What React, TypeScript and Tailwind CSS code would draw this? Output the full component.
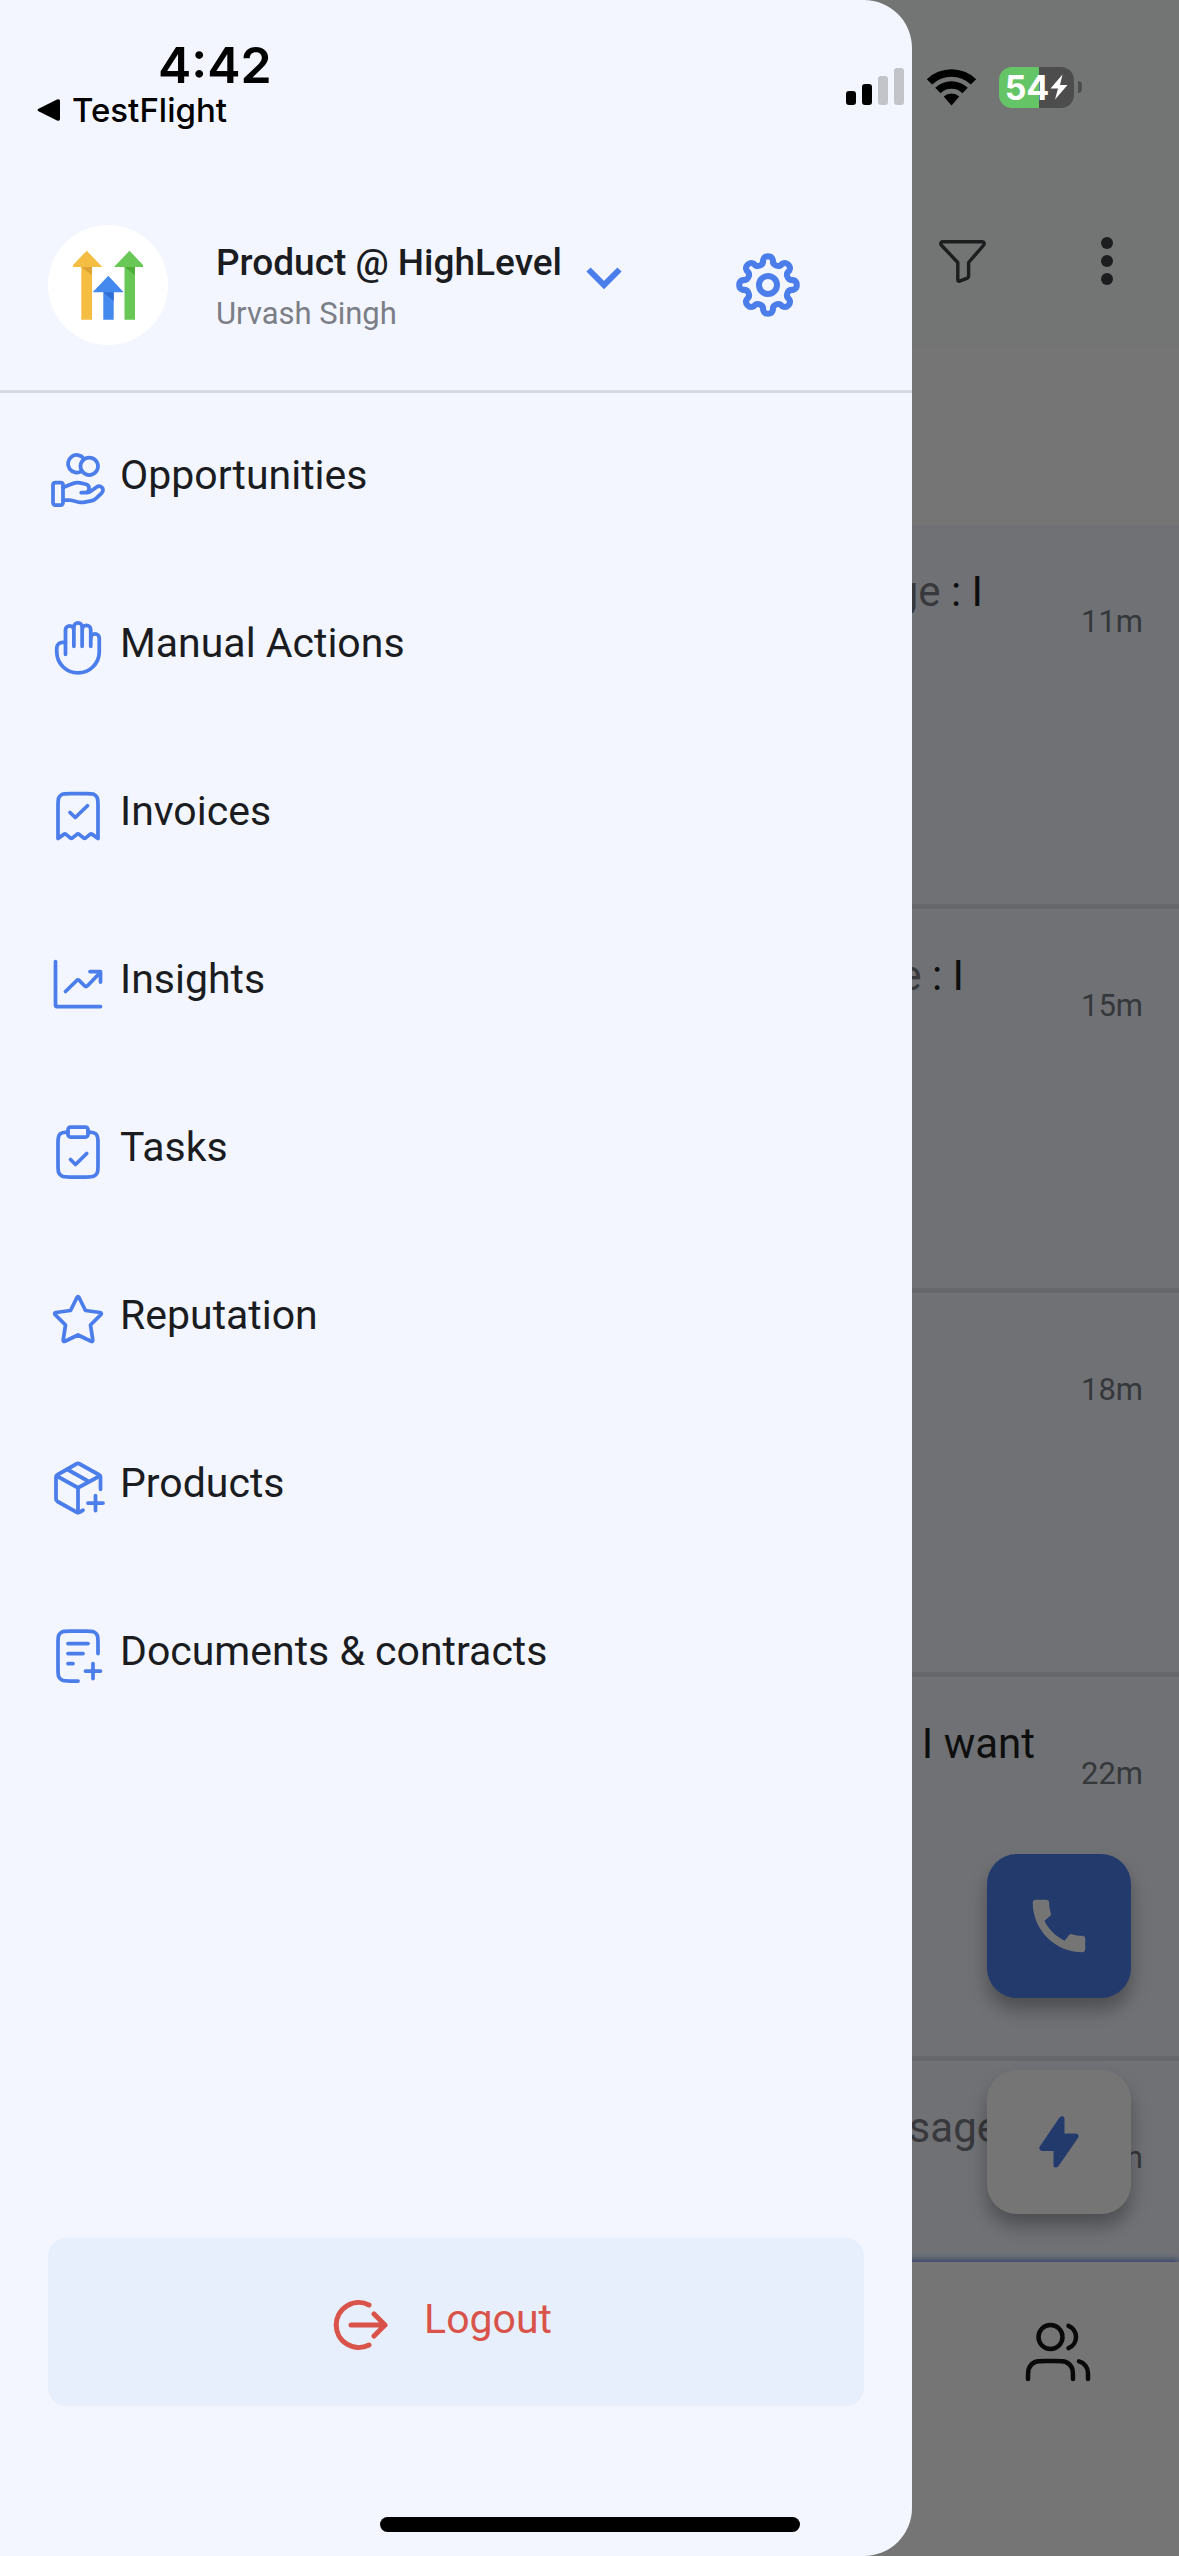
import React from 'react';
import { MdCall } from 'react-icons/md';

const Icon = ({ children, className = 'size-[60px]', strokeWidth = 1.5 }: { children: React.ReactNode; className?: string; strokeWidth?: number }) => (
  <svg
    viewBox="0 0 24 24"
    className={`shrink-0 ${className}`}
    fill="none"
    stroke="currentColor"
    strokeWidth={strokeWidth}
    strokeLinecap="round"
    strokeLinejoin="round"
    aria-hidden="true"
  >
    {children}
  </svg>
);

const menuItems = [
  {
    label: 'Opportunities',
    icon: (
      <>
        <path d="M6 20.09H8.61C8.95 20.09 9.29 20.13 9.62 20.21L12.38 20.88C12.98 21.02 13.6 21.04 14.2 20.92L17.25 20.33C18.06 20.17 18.8 19.79 19.38 19.22L21.54 17.12C22.15 16.52 22.15 15.55 21.54 14.95C20.98 14.41 20.1 14.35 19.48 14.81L16.96 16.64C16.6 16.91 16.16 17.05 15.71 17.05H13.29H14.83C15.7 17.05 16.41 16.36 16.41 15.52V15.21C16.41 14.51 15.92 13.89 15.21 13.72L12.83 13.14C12.44 13.05 12.04 13 11.64 13C10.68 13 8.93 13.8 8.93 13.8L6 15.02" />
        <rect x="2" y="13" width="4" height="9" rx="0.9" />
        <circle cx="16.5" cy="6.5" r="3.5" />
        <path d="M14.3 3.4A3.5 3.5 0 1 0 13.5 8.37" />
      </>
    ),
  },
  {
    label: 'Manual Actions',
    icon: (
      <>
        <path d="M7 14.5V4.7A1.68 1.68 0 0 1 10.35 4.7M10.35 11.3V3.6A1.65 1.65 0 0 1 13.65 3.6V11.3M13.65 4.7A1.7 1.7 0 0 1 17.1 4.7V11.3" />
        <path d="M17.1 8A1.7 1.7 0 0 1 20.5 8V13.5A8.5 8.5 0 0 1 3.5 13.5V12A2.4 2.4 0 0 1 5.9 9.7H7" />
      </>
    ),
  },
  {
    label: 'Invoices',
    icon: (
      <>
        <path d="M4 7.8C4 6.12 4 5.28 4.33 4.64A3 3 0 0 1 5.64 3.33C6.28 3 7.12 3 8.8 3H15.2C16.88 3 17.72 3 18.36 3.33A3 3 0 0 1 19.67 4.64C20 5.28 20 6.12 20 7.8V21L17.7 19.35Q17.25 19.05 16.8 19.35L15.1 20.75Q14.65 21.05 14.2 20.75L12.45 19.35Q12 19.05 11.55 19.35L9.8 20.75Q9.35 21.05 8.9 20.75L7.2 19.35Q6.75 19.05 6.3 19.35L4 21Z" />
        <path d="M8.8 10.6L10.9 12.6L15.8 7.9" />
      </>
    ),
  },
  {
    label: 'Insights',
    icon: (
      <>
        <path d="M3 3V20.4Q3 21 3.6 21H21" />
        <path d="M7 15L11.4 10.7Q12 10.1 12.6 10.7L14.6 12.7Q15.2 13.3 15.8 12.7L21 7.3M16.8 7H21V11.2" />
      </>
    ),
  },
  {
    label: 'Tasks',
    icon: (
      <>
        <path d="M16 4C18 4 18.6 4.2 19.2 4.8C20 5.6 20 6.6 20 8V17.2C20 18.9 20 19.7 19.67 20.36A3 3 0 0 1 18.36 21.67C17.72 22 16.9 22 15.2 22H8.8C7.1 22 6.28 22 5.64 21.67A3 3 0 0 1 4.33 20.36C4 19.7 4 18.9 4 17.2V8C4 6.6 4 5.6 4.8 4.8C5.4 4.2 6 4 8 4" />
        <rect x="8" y="2" width="8" height="4" rx="1" />
        <path d="M9 15L11 17L15.5 12.6" />
      </>
    ),
  },
  {
    label: 'Reputation',
    icon: (
      <path d="M11.6 3Q12 2.3 12.4 3L15 8.2L20.8 9Q21.7 9.3 21.1 9.9L17 14L17.9 19.9Q18 20.8 17.2 20.5L12 18L6.8 20.5Q6 20.8 6.1 19.9L7 14L2.9 9.9Q2.3 9.3 3.2 9L9 8.2Z" />
    ),
  },
  {
    label: 'Products',
    icon: (
      <>
        <path d="M14 20.9L12.5 21.7Q12 22 11.5 21.7L3.8 17.4Q3.2 17 3.2 16.4V7.6Q3.2 7 3.8 6.7L11.5 2.3Q12 2 12.5 2.3L20.4 6.7Q21 7 21 7.6V12.5" />
        <path d="M3.5 7.2L12 11.9L20.7 7.2M12 11.9V21.8M7.8 4.6L16.3 9.4M19 15V21M16 18H22" />
      </>
    ),
  },
  {
    label: 'Documents & contracts',
    icon: (
      <>
        <path d="M20 11V6.8C20 5.12 20 4.28 19.67 3.64A3 3 0 0 0 18.36 2.33C17.72 2 16.88 2 15.2 2H8.8C7.12 2 6.28 2 5.64 2.33A3 3 0 0 0 4.33 3.64C4 4.28 4 5.12 4 6.8V17.2C4 18.88 4 19.72 4.33 20.36A3 3 0 0 0 5.64 21.67C6.28 22 7.12 22 8.8 22H12" />
        <path d="M8 7H16M8 11H14M8 15H10M18 15V21M15 18H21" />
      </>
    ),
  },
];

const conversations = [
  { sender: 'Message', text: ' : I', time: '11m', inset: 'pr-24' },
  { sender: 'Message', text: ' : I', time: '15m', inset: 'pr-[115px]' },
  { sender: '', text: '', time: '18m', inset: '' },
  { sender: '', text: 'I want', time: '22m', inset: 'pr-11' },
  { sender: 'Message', text: '', time: '25m', inset: 'pr-20' },
];

// Closed outline of eight round lobes joined by round valleys
const gearOutline = () => {
  const joints = Array.from({ length: 16 }, (_, i) => {
    const a = ((i - 0.5) / 16) * Math.PI * 2;
    return `${(36 + 25.4 * Math.sin(a)).toFixed(2)} ${(36 - 25.4 * Math.cos(a)).toFixed(2)}`;
  });
  const arcs = joints.map((_, i) => `A5.1 5.1 0 0 ${i % 2 === 0 ? 1 : 0} ${joints[(i + 1) % 16]}`);
  return `M${joints[0]}${arcs.join('')}Z`;
};

const Logo = () => (
  <svg viewBox="0 0 120 120" className="size-[120px] shrink-0 rounded-full bg-white" role="img" aria-label="HighLevel">
    <path d="M33.3 41H44V94.7H33.3Z" fill="#f5bd41" />
    <path d="M25 42V40L38.7 25.7L54.3 42Z" fill="#f5bd41" />
    <path d="M33.3 42H44V50.3Z" fill="#dda233" />
    <path d="M76.5 41H87V94.7H76.5Z" fill="#68c755" />
    <path d="M66 42L81.5 25.7L95 40V42Z" fill="#68c755" />
    <path d="M76.5 42H87V50.3Z" fill="#4fae3a" />
    <path d="M55.3 66H65.7V94.7H55.3Z" fill="#4389ee" />
    <path d="M44.7 67.3L60.3 50.7L75.7 67.3Z" fill="#4389ee" />
    <path d="M55.3 67.3H65.7V76Z" fill="#2f6fd3" />
  </svg>
);

const StatusBar = () => (
  <div className="absolute inset-x-0 top-0 z-30 flex items-start justify-between pt-9 pr-[97px] pl-9 font-['Inter',sans-serif] text-black">
    <div className="flex flex-col">
      <span className="pl-[122px] text-[50px] leading-[58px] font-semibold">4:42</span>
      <a href="#testflight" className="flex items-center gap-3 text-[33px] leading-[32px] font-medium">
        <svg viewBox="0 0 24 24" className="size-6" aria-hidden="true">
          <path d="M3 10.5L21 1.5Q24 0.5 24 3V21Q24 23.5 21 22.5L3 13.5Q0 12 3 10.5Z" fill="currentColor" />
        </svg>
        TestFlight
      </a>
    </div>
    <div className="flex h-[102px] items-center gap-[22px]">
      <svg viewBox="0 0 58 38" className="h-[38px] w-[58px]" aria-hidden="true">
        <rect x="0" y="23" width="10" height="14" rx="3" />
        <rect x="16" y="16" width="10" height="21" rx="3" />
        <rect x="32" y="8" width="10" height="29" rx="3" fill="#c2c4ca" />
        <rect x="48" y="0" width="10" height="37" rx="3" fill="#c2c4ca" />
      </svg>
      <svg viewBox="0 0 51 38" className="h-[38px] w-[51px]" aria-hidden="true">
        <path d="M0.8 11.2A35.5 35.5 0 0 1 50.2 11.2L44.8 16.6A27.8 27.8 0 0 0 6.2 16.6Z" />
        <path d="M9.2 19.8A23.3 23.3 0 0 1 41.8 19.8L36.4 25.2A15.6 15.6 0 0 0 14.6 25.2Z" />
        <path d="M17.7 28.6A11.5 11.5 0 0 1 33.3 28.6L25.5 37.5Z" />
      </svg>
      <div className="flex items-center gap-1">
        <div className="flex h-[41px] w-[75px] items-center justify-center gap-px overflow-hidden rounded-[13px] bg-linear-to-r from-[#65c466] from-54% to-[#4d4d4d] to-54% text-[34px] font-bold text-white">
          54
          <svg viewBox="0 0 18 26" className="h-[26px] w-[18px]" aria-hidden="true">
            <path d="M12.5 0.5L0.5 14.5H8L5 25.5L17.5 11H10Z" fill="currentColor" />
          </svg>
        </div>
        <span className="h-3 w-1 rounded-r-full bg-[#4d4d4d]" />
      </div>
    </div>
  </div>
);

const Inbox = () => (
  <div className="relative flex min-h-screen flex-col bg-[#f3f6fe]">
    <header className="flex h-[347px] items-end justify-end gap-[109px] bg-[#fafefc] pr-15 pb-[50px] text-[#3c4043]">
      <button type="button" aria-label="Filter" className="flex h-[72px] items-center">
        <svg viewBox="0 0 47 43" className="h-[43px] w-[47px]" fill="none" stroke="currentColor" strokeWidth="3.4" strokeLinejoin="round" aria-hidden="true">
          <path d="M4 1.8H43Q46.2 2.2 44.8 5L29.6 22.5V36Q29.6 37.6 28.4 38.2L20.6 41.2Q18.8 41.5 18.8 40V22.5L2.2 5Q0.8 2.2 4 1.8Z" />
        </svg>
      </button>
      <button type="button" aria-label="More options" className="flex h-[72px] w-6 flex-col items-center justify-center gap-1.5">
        <span className="size-3 rounded-full bg-current" />
        <span className="size-3 rounded-full bg-current" />
        <span className="size-3 rounded-full bg-current" />
      </button>
    </header>
    <div className="h-[178px] bg-white" />
    <ul className="flex flex-1 flex-col">
      {conversations.map((c) => (
        <li key={c.time} className="flex h-[384px] justify-end border-b-5 border-[#dee0e9] pr-9 last:h-auto last:flex-1 last:border-0">
          <p className={`pt-[43px] text-right text-[42px] leading-[48px] whitespace-pre text-[#1f1f1f] ${c.inset}`}>
            <span className="text-[#7a7c84]">{c.sender}</span>
            {c.text}
          </p>
          <time className="w-16 pt-[81px] text-right text-[31px] leading-[32px] text-[#757a80]">{c.time}</time>
        </li>
      ))}
    </ul>
    <nav className="flex h-[294px] items-start justify-end bg-white pt-[54px] pr-[85px] shadow-[0_-3px_6px_#7f9fe8]">
      <a href="#contacts" aria-label="Contacts" className="text-[#141414]">
        <Icon className="size-[72px]">
          <path d="M22 21V19C22 17.14 20.73 15.57 19 15.13M15.5 3.29A4 4 0 0 1 15.5 10.71M17 21C17 19.14 17 18.2 16.7 17.47A4 4 0 0 0 14.53 15.3C13.8 15 12.86 15 11 15H8C6.14 15 5.2 15 4.47 15.3A4 4 0 0 0 2.3 17.47C2 18.2 2 19.14 2 21M13.5 7A4 4 0 1 1 5.5 7A4 4 0 0 1 13.5 7Z" />
        </Icon>
      </a>
    </nav>
    <div className="absolute right-12 bottom-[342px] flex flex-col gap-[72px]">
      <button type="button" aria-label="Call" className="flex size-36 items-center justify-center rounded-[30px] bg-[#4c7eeb] text-white shadow-[0_12px_18px_rgba(0,0,0,0.3)]">
        <MdCall className="size-[70px]" />
      </button>
      <button type="button" aria-label="Quick actions" className="flex size-36 items-center justify-center rounded-[30px] bg-white text-[#4c7eeb] shadow-[0_12px_18px_rgba(0,0,0,0.3)]">
        <svg viewBox="0 0 40 52" className="h-[52px] w-10" fill="currentColor" aria-hidden="true">
          <path d="M20.5 1.5Q22 0 24 0.3Q25.5 0.8 25.5 3V17.5H36.5Q41 18 39 22L19.5 50Q18 52 16 51.5Q14.5 51 14.5 49V35H3Q-1 34 0.8 30.5Z" />
        </svg>
      </button>
    </div>
    <div className="absolute inset-0 bg-black/54" />
  </div>
);

const Drawer = () => (
  <aside className="absolute inset-y-0 left-0 z-20 flex w-full max-w-[912px] flex-col rounded-r-[48px] bg-[#f3f6fe] text-[#1b1c1f]">
    <div className="flex h-[393px] items-end border-b-3 border-[#d5d9e3] px-12 pb-[45px]">
      <Logo />
      <div className="flex flex-1 items-center gap-6 pb-1 pl-12">
        <div className="flex flex-col">
          <h1 className="text-[37px] leading-[48px] font-medium">Product @ HighLevel</h1>
          <p className="text-[31px] leading-[54px] text-[#7b7e86]">Urvash Singh</p>
        </div>
        <button type="button" aria-label="Switch account" className="mb-6 text-[#4c7eeb]">
          <svg viewBox="0 0 36 24" className="h-6 w-9" fill="none" stroke="currentColor" strokeWidth="6" aria-hidden="true">
            <path d="M2.5 3.5L18 19L33.5 3.5" />
          </svg>
        </button>
      </div>
      <button type="button" aria-label="Settings" className="mr-15 mb-6 text-[#4c7eeb]">
        <svg viewBox="0 0 72 72" className="size-[72px]" fill="none" stroke="currentColor" strokeWidth="6" strokeLinejoin="round" aria-hidden="true">
          <path d={gearOutline()} />
          <circle cx="36" cy="36" r="9" />
        </svg>
      </button>
    </div>

    <nav className="flex flex-1 flex-col gap-[108px] px-12 pt-[57px]">
      {menuItems.map((item) => (
        <a key={item.label} href="#menu" className="flex items-start gap-3">
          <span className="text-[#4c7eeb]">
            <Icon>{item.icon}</Icon>
          </span>
          <span className="text-[41px] leading-[50px]">{item.label}</span>
        </a>
      ))}
    </nav>

    <div className="px-12 pb-[150px]">
      <button type="button" className="flex h-[168px] w-full items-center justify-center gap-9 rounded-[18px] bg-[#e7effc] pr-8 text-[41px] text-[#d9534a]">
        <svg viewBox="0 0 60 60" className="mt-1.5 size-[60px]" fill="none" stroke="currentColor" strokeWidth="5" strokeLinecap="round" strokeLinejoin="round" aria-hidden="true">
          <path d="M41 10A22.5 22.5 0 1 0 41 50M23 30H57M46 19L57 30L46 41" />
        </svg>
        <span className="mb-1">Logout</span>
      </button>
    </div>
  </aside>
);

export default function App() {
  return (
    <div className="relative min-h-screen overflow-hidden font-['Roboto',sans-serif]">
      <Inbox />
      <Drawer />
      <StatusBar />
      <div className="absolute bottom-6 left-1/2 z-30 h-[15px] w-[420px] -translate-x-1/2 rounded-full bg-black" />
    </div>
  );
}
